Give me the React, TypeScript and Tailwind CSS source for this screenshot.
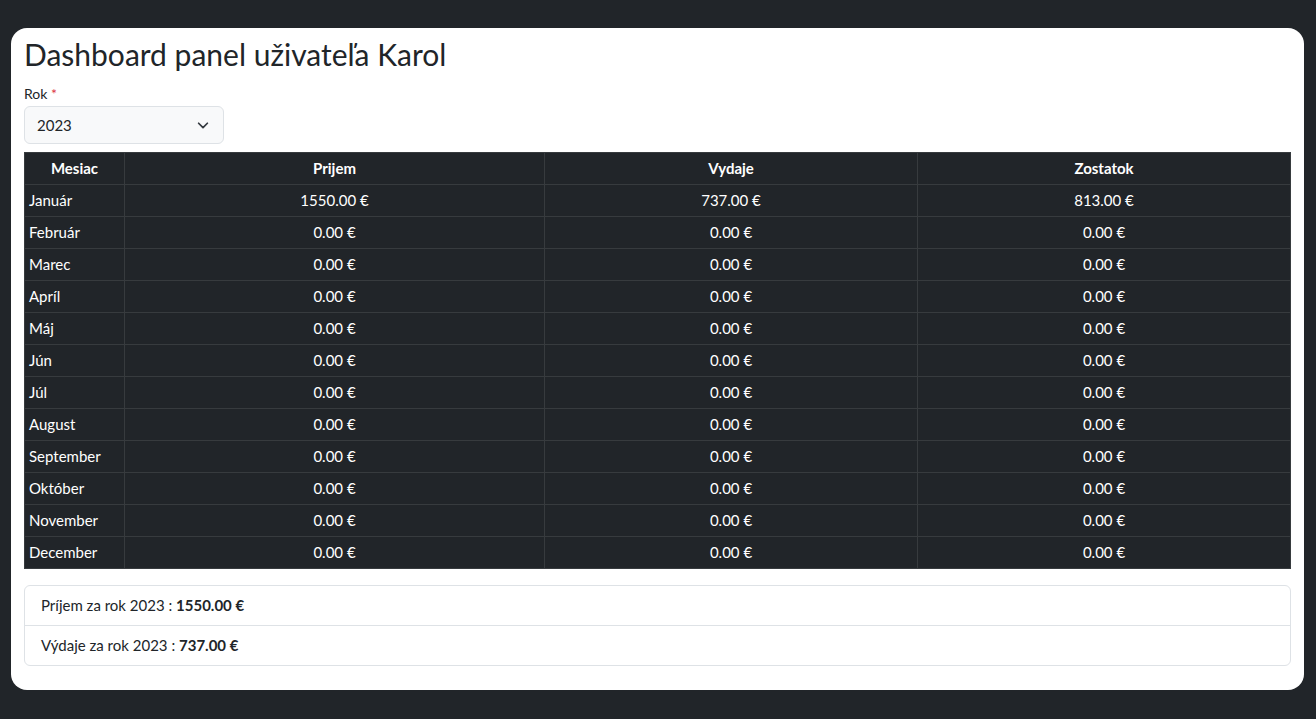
import React from "react";

const months = [
  ["Január", "1550.00 €", "737.00 €", "813.00 €"],
  ["Február", "0.00 €", "0.00 €", "0.00 €"],
  ["Marec", "0.00 €", "0.00 €", "0.00 €"],
  ["Apríl", "0.00 €", "0.00 €", "0.00 €"],
  ["Máj", "0.00 €", "0.00 €", "0.00 €"],
  ["Jún", "0.00 €", "0.00 €", "0.00 €"],
  ["Júl", "0.00 €", "0.00 €", "0.00 €"],
  ["August", "0.00 €", "0.00 €", "0.00 €"],
  ["September", "0.00 €", "0.00 €", "0.00 €"],
  ["Október", "0.00 €", "0.00 €", "0.00 €"],
  ["November", "0.00 €", "0.00 €", "0.00 €"],
  ["December", "0.00 €", "0.00 €", "0.00 €"],
];

export default function App() {
  return (
    <div
      className="min-h-[719px] w-full bg-[#212529] pt-[28px] pl-[11px] pr-[12px] pb-[29px]"
      style={{ fontFamily: "Lato, 'Noto Sans', sans-serif" }}
    >
      <div className="bg-white rounded-[16px] px-[13px] pt-[8px] pb-[24px] text-[#212529]">
        <h1 className="text-[30px] leading-[36px] font-normal mt-[0px]">Dashboard panel uživateľa Karol</h1>
        <div className="mt-[13px] text-[14px] leading-[18px] text-[#212529]">
          Rok <span className="text-[#dc3545]">*</span>
        </div>
        <div className="mt-[3px] w-[200px] h-[38px] border border-[#dee2e6] rounded-[6px] bg-[#f8f9fa] flex items-center justify-between pl-[12px] pr-[13px] text-[15px]">
          <span>2023</span>
          <svg width="14" height="14" viewBox="0 0 16 16" fill="none" stroke="#343a40" strokeWidth="2" strokeLinecap="round" strokeLinejoin="round">
            <path d="M3 6l5 5 5-5" />
          </svg>
        </div>
        <table className="mt-[8px] w-full border-collapse bg-[#212529] text-white text-[15px] table-fixed">
          <colgroup>
            <col className="w-[100px]" />
            <col className="w-[420px]" />
            <col className="w-[373px]" />
            <col />
          </colgroup>
          <thead>
            <tr className="h-[32px]">
              {["Mesiac", "Prijem", "Vydaje", "Zostatok"].map((h) => (
                <th key={h} className="border border-[#373b3e] font-bold text-center px-[4px] py-0">
                  {h}
                </th>
              ))}
            </tr>
          </thead>
          <tbody>
            {months.map((r) => (
              <tr key={r[0]} className="h-[32px]">
                <td className="border border-[#373b3e] px-[4px] py-0 text-left">{r[0]}</td>
                <td className="border border-[#373b3e] px-[4px] py-0 text-center">{r[1]}</td>
                <td className="border border-[#373b3e] px-[4px] py-0 text-center">{r[2]}</td>
                <td className="border border-[#373b3e] px-[4px] py-0 text-center">{r[3]}</td>
              </tr>
            ))}
          </tbody>
        </table>
        <div className="mt-[16px] border border-[#dee2e6] rounded-[6px] text-[15px] text-[#212529]">
          <div className="h-[40px] flex items-center px-[16px] border-b border-[#dee2e6]">
            Príjem za rok 2023 :&nbsp;<b>1550.00 €</b>
          </div>
          <div className="h-[39px] flex items-center px-[16px]">
            Výdaje za rok 2023 :&nbsp;<b>737.00 €</b>
          </div>
        </div>
      </div>
    </div>
  );
}
